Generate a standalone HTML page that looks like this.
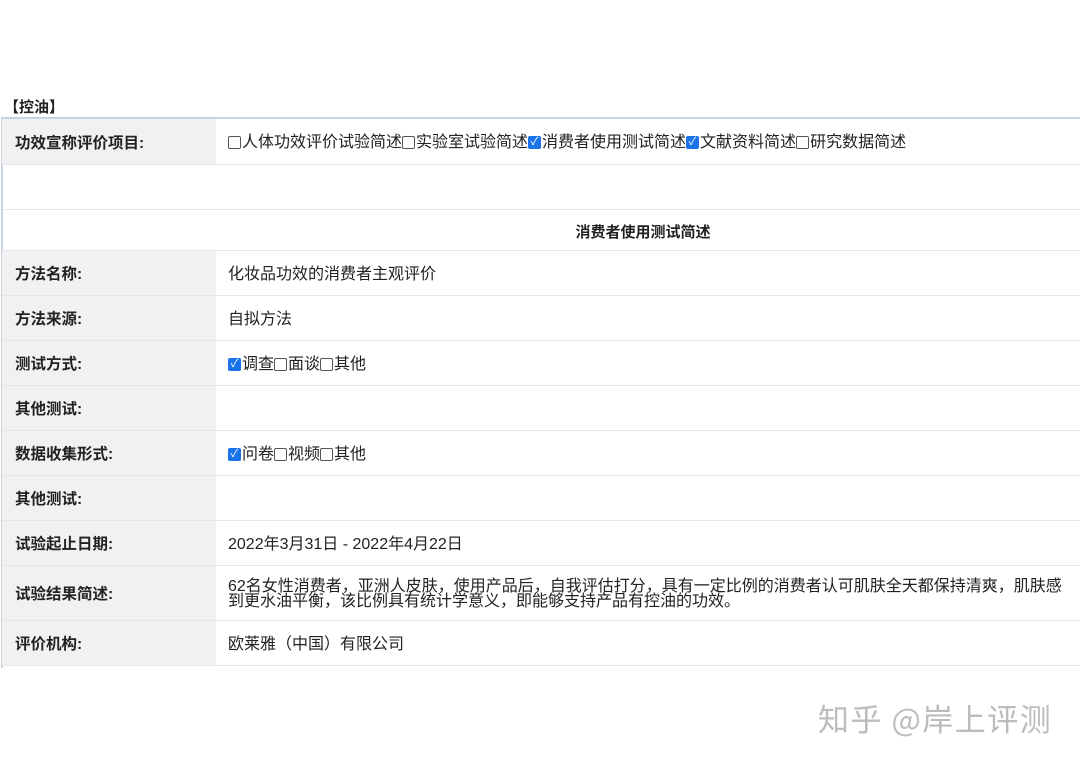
<!DOCTYPE html><html><head><meta charset="utf-8"><style>
body{margin:0;width:1080px;height:761px;background:#fff;font-family:"Liberation Sans","Noto Sans CJK SC",sans-serif;color:#222;position:relative;overflow:hidden}
.a{position:absolute}
.r{position:absolute;left:2px;width:1078px;border-bottom:1px solid #e4e6ea}
.l{position:absolute;left:0;top:0;bottom:0;width:214px;background:#f1f1f1;font-weight:bold;font-size:15.5px;padding-left:13px;box-sizing:border-box;display:flex;align-items:center}
.v{position:absolute;left:226px;top:2px;bottom:0;right:20px;font-size:16px;display:flex;align-items:center;line-height:15px}
.cb{display:inline-block;width:13px;height:13px;border:1px solid #555;border-radius:2px;vertical-align:-1px;margin-right:1px;box-sizing:border-box}
.ck{display:inline-block;width:13px;height:13px;background:#1a73e8;border-radius:2px;vertical-align:-1px;color:#fff;font-size:11px;line-height:13px;text-align:center;margin-right:1px}
</style></head><body>
<div class="a" style="left:4px;top:96px;font-size:15px;font-weight:bold">【控油】</div>
<div class="a" style="left:1px;top:117px;width:1079px;height:549px;border-top:2px solid #c9d3de;border-left:2px solid #c9d3de"></div>
<div class="r" style="top:119px;height:45px"><div class="l">功效宣称评价项目:</div><div class="v"><span class="cb"></span>人体功效评价试验简述<span class="cb"></span>实验室试验简述<span class="ck">✓</span>消费者使用测试简述<span class="ck">✓</span>文献资料简述<span class="cb"></span>研究数据简述</div></div>
<div class="r" style="top:165px;height:44px"></div>
<div class="r" style="top:210px;height:40px"><div class="a" style="left:0;right:0;top:2px;bottom:0;display:flex;align-items:center;justify-content:center;font-weight:bold;font-size:15px;padding-left:204px">消费者使用测试简述</div></div>
<div class="r" style="top:251px;height:44px"><div class="l">方法名称:</div><div class="v">化妆品功效的消费者主观评价</div></div>
<div class="r" style="top:296px;height:44px"><div class="l">方法来源:</div><div class="v">自拟方法</div></div>
<div class="r" style="top:341px;height:44px"><div class="l">测试方式:</div><div class="v"><span class="ck">✓</span>调查<span class="cb"></span>面谈<span class="cb"></span>其他</div></div>
<div class="r" style="top:386px;height:44px"><div class="l">其他测试:</div></div>
<div class="r" style="top:431px;height:44px"><div class="l">数据收集形式:</div><div class="v"><span class="ck">✓</span>问卷<span class="cb"></span>视频<span class="cb"></span>其他</div></div>
<div class="r" style="top:476px;height:44px"><div class="l">其他测试:</div></div>
<div class="r" style="top:521px;height:44px"><div class="l">试验起止日期:</div><div class="v">2022年3月31日 - 2022年4月22日</div></div>
<div class="r" style="top:566px;height:54px"><div class="l">试验结果简述:</div><div class="v" style="right:18px">62名女性消费者，亚洲人皮肤，使用产品后，自我评估打分，具有一定比例的消费者认可肌肤全天都保持清爽，肌肤感到更水油平衡，该比例具有统计学意义，即能够支持产品有控油的功效。</div></div>
<div class="r" style="top:621px;height:44px"><div class="l">评价机构:</div><div class="v">欧莱雅（中国）有限公司</div></div>
<div class="a" style="left:818px;top:695px;font-size:31px;color:#bcbcbc;letter-spacing:1.5px;font-family:'Noto Sans CJK SC',sans-serif">知乎 @岸上评测</div>
</body></html>
